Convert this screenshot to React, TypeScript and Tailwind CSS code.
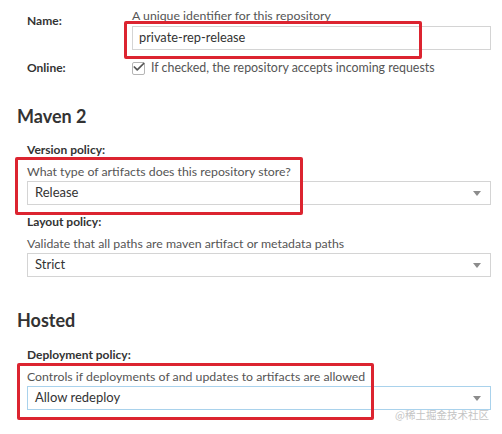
import { Check } from "lucide-react";

const font = { fontFamily: "Lato, 'Noto Sans', sans-serif" };

function SelectBox({ value, focused }: { value: string; focused?: boolean }) {
  return (
    <div
      className={`mt-[2px] h-[24px] flex items-center justify-between pl-[7px] pr-[9px] bg-white border ${
        focused ? "border-[#a9d2ec]" : "border-[#d4d4d4]"
      }`}
    >
      <span className="text-[13px] text-[#333]">{value}</span>
      <span className="w-0 h-0 border-l-[4px] border-r-[4px] border-t-[5px] border-l-transparent border-r-transparent border-t-[#8c8c8c]" />
    </div>
  );
}

export default function App() {
  return (
    <div className="relative w-[502px] h-[434px] bg-white overflow-hidden" style={font}>
      <div className="pl-[27px] pr-[11px]">
        {/* Name */}
        <div className="flex">
          <div className="w-[105px] pt-[14px] text-[12px] leading-[14px] font-bold text-[#333]">Name:</div>
          <div className="flex-1">
            <div className="mt-[9px] text-[12.3px] leading-[14px] text-[#555]">A unique identifier for this repository</div>
            <div className="mt-[3px] h-[24px] flex items-center pl-[6px] border border-[#d4d4d4] text-[12.8px] text-[#333]">
              private-rep-release
            </div>
          </div>
        </div>

        {/* Online */}
        <div className="flex mt-[11px] h-[14px] items-center">
          <div className="w-[105px] text-[12px] font-bold text-[#333]">Online:</div>
          <div className="flex items-center gap-[6px]">
            <span className="relative w-[13px] h-[13px] border border-[#b5b5b5] rounded-[2px] bg-white">
              <Check className="absolute -top-[3px] -left-[1px] text-[#555]" size={14} strokeWidth={3} />
            </span>
            <span className="text-[12.4px] text-[#555]">If checked, the repository accepts incoming requests</span>
          </div>
        </div>
      </div>

      {/* Maven 2 */}
      <div className="pl-[17px] pr-[11px]">
        <h2 className="mt-[31px] text-[18px] leading-[20px] font-bold text-[#333]">Maven 2</h2>
        <div className="pl-[10px]">
          <div className="mt-[17px] text-[12px] leading-[14px] font-bold text-[#333]">Version policy:</div>
          <div className="mt-[8px] text-[12.3px] leading-[14px] text-[#555]">What type of artifacts does this repository store?</div>
          <SelectBox value="Release" />

          <div className="mt-[10px] text-[12px] leading-[14px] font-bold text-[#333]">Layout policy:</div>
          <div className="mt-[8px] text-[12.3px] leading-[14px] text-[#555]">Validate that all paths are maven artifact or metadata paths</div>
          <SelectBox value="Strict" />
        </div>

        {/* Hosted */}
        <h2 className="mt-[33px] text-[18px] leading-[20px] font-bold text-[#333]">Hosted</h2>
        <div className="pl-[10px]">
          <div className="mt-[18px] text-[12px] leading-[14px] font-bold text-[#333]">Deployment policy:</div>
          <div className="mt-[8px] text-[12.3px] leading-[14px] text-[#555]">Controls if deployments of and updates to artifacts are allowed</div>
          <SelectBox value="Allow redeploy" focused />
        </div>
      </div>

      {/* annotation boxes */}
      <div className="absolute left-[124px] top-[21px] w-[298px] h-[38px] border-[3px] border-[#dc2430] rounded-[2px]" />
      <div className="absolute left-[15px] top-[157px] w-[288px] h-[58px] border-[3px] border-[#dc2430] rounded-[2px]" />
      <div className="absolute left-[17px] top-[363px] w-[357px] h-[57px] border-[3px] border-[#dc2430] rounded-[2px]" />

      {/* watermark */}
      <div
        className="absolute left-[395px] top-[407px] whitespace-nowrap text-[10.5px] leading-[16px] text-[#c4c4c4]"
        style={{ fontFamily: "'Noto Sans CJK SC', sans-serif" }}
      >
        @稀土掘金技术社区
      </div>
    </div>
  );
}
